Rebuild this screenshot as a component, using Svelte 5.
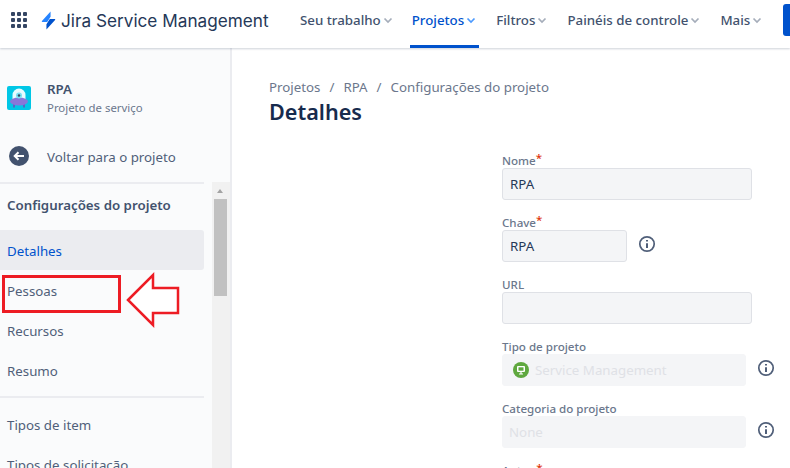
<script>
	let nav = [
		{ label: "Seu trabalho" },
		{ label: "Projetos", active: true },
		{ label: "Filtros" },
		{ label: "Painéis de controle" },
		{ label: "Mais" }
	];
	let crumbs = ["Projetos", "RPA", "Configurações do projeto"];
	let dots = [0, 1, 2, 3, 4, 5, 6, 7, 8];
</script>

<div class="page">
	<header>
		<div class="apps">
			{#each dots as d}<i></i>{/each}
		</div>
		<svg class="bolt" width="15" height="19" viewBox="0 0 16 20">
			<path d="M10.2 0.5 L1 10.6 C0.6 11 0.9 11.6 1.4 11.6 H6.6 L10.2 6 Z" fill="#2684ff"/>
			<path d="M5.8 19.5 L15 9.4 C15.4 9 15.1 8.4 14.6 8.4 H9.4 L5.8 14 Z" fill="#0052cc"/>
		</svg>
		<div class="brand">Jira Service Management</div>
		<nav>
			{#each nav as item}
				<div class="nav-item" class:active={item.active}>
					{item.label}
					<svg width="12" height="12" viewBox="0 0 12 12"><path d="M2.5 4.5 L6 8 L9.5 4.5" fill="none" stroke="currentColor" stroke-width="1.7"/></svg>
				</div>
			{/each}
		</nav>
		<div class="create"></div>
	</header>

	<div class="body">
		<aside>
			<div class="project">
				<svg class="avatar" width="24" height="24" viewBox="0 0 24 24">
					<rect width="24" height="24" rx="2" fill="#00c7e6"/>
					<path d="M7 18 v3.5 M17 18 v3.5" stroke="#6554c0" stroke-width="1.6"/>
					<path d="M5.5 15 V9 a6.5 6.5 0 0 1 13 0 V15 Z" fill="#e6fcff"/>
					<ellipse cx="12" cy="15.5" rx="9" ry="4" fill="#8777d9"/>
					<circle cx="12" cy="9.5" r="3" fill="#79e2f2"/>
					<circle cx="12" cy="9.5" r="1.2" fill="#344563"/>
				</svg>
				<div>
					<div class="project-name">RPA</div>
					<div class="project-type">Projeto de serviço</div>
				</div>
			</div>
			<div class="back">
				<svg width="20" height="20" viewBox="0 0 20 20">
					<circle cx="10" cy="10" r="10" fill="#42526e"/>
					<path d="M15 10 H6 M9.5 6.2 L5.7 10 L9.5 13.8" fill="none" stroke="#fff" stroke-width="2"/>
				</svg>
				<span>Voltar para o projeto</span>
			</div>
			<div class="scroll-area">
				<div class="menu">
					<div class="menu-title">Configurações do projeto</div>
					<div class="menu-item selected">Detalhes</div>
					<div class="menu-item">Pessoas</div>
					<div class="menu-item">Recursos</div>
					<div class="menu-item">Resumo</div>
					<div class="sep"></div>
					<div class="menu-item">Tipos de item</div>
					<div class="menu-item">Tipos de solicitação</div>
				</div>
				<div class="scrollbar">
					<div class="up"></div>
					<div class="thumb"></div>
				</div>
			</div>
			<div class="mark"></div>
			<svg class="arrow" width="60" height="60" viewBox="0 0 60 60">
				<path d="M4 30 L29 5 V18 H54 V43 H29 V55 Z" fill="#fff" stroke="#ed1c24" stroke-width="2.5"/>
			</svg>
		</aside>

		<main>
			<div class="crumbs">
				{#each crumbs as c, i}
					{#if i > 0}<span class="slash">/</span>{/if}
					<span>{c}</span>
				{/each}
			</div>
			<h1>Detalhes</h1>
			<form>
				<div class="field">
					<div class="label">Nome<b>*</b></div>
					<div class="input wide">RPA</div>
				</div>
				<div class="field">
					<div class="label">Chave<b>*</b></div>
					<div class="row">
						<div class="input short">RPA</div>
						<svg class="info" width="18" height="18" viewBox="0 0 18 18"><circle cx="9" cy="9" r="7.2" fill="none" stroke="#505f79" stroke-width="1.7"/><path d="M9 8.2 V13 M9 5 V6.6" stroke="#505f79" stroke-width="2"/></svg>
					</div>
				</div>
				<div class="field">
					<div class="label">URL</div>
					<div class="input wide"></div>
				</div>
				<div class="field">
					<div class="label">Tipo de projeto</div>
					<div class="row">
						<div class="input off type">
							<svg width="16" height="16" viewBox="0 0 16 16"><circle cx="8" cy="8" r="8" fill="#5fa83f"/><rect x="4" y="4" width="8" height="6" rx="1" fill="#fff"/><rect x="5.5" y="5.3" width="5" height="3.4" fill="#5fa83f"/><path d="M6 12 H10 M8 10 V12" stroke="#fff" stroke-width="1.2"/></svg>
							Service Management
						</div>
						<svg class="info" width="18" height="18" viewBox="0 0 18 18"><circle cx="9" cy="9" r="7.2" fill="none" stroke="#505f79" stroke-width="1.7"/><path d="M9 8.2 V13 M9 5 V6.6" stroke="#505f79" stroke-width="2"/></svg>
					</div>
				</div>
				<div class="field">
					<div class="label">Categoria do projeto</div>
					<div class="row">
						<div class="input off">None</div>
						<svg class="info" width="18" height="18" viewBox="0 0 18 18"><circle cx="9" cy="9" r="7.2" fill="none" stroke="#505f79" stroke-width="1.7"/><path d="M9 8.2 V13 M9 5 V6.6" stroke="#505f79" stroke-width="2"/></svg>
					</div>
				</div>
				<div class="field">
					<div class="label">Autor <b>*</b></div>
				</div>
			</form>
		</main>
	</div>
</div>

<style>
	:global(body) {
		margin: 0;
		background: #fff;
		overflow: hidden;
	}
	.page {
		width: 790px;
		height: 468px;
		overflow: hidden;
		font-family: "Noto Sans", Roboto, sans-serif;
		font-size: 13.3px;
		color: #42526e;
		position: relative;
	}
	header {
		height: 48px;
		display: flex;
		align-items: center;
		box-sizing: border-box;
		padding: 0 0 8px 11px;
		background: #fff;
		box-shadow: 0 1px 2px rgba(9, 30, 66, 0.2);
		position: relative;
		z-index: 2;
	}
	.apps {
		display: grid;
		grid-template-columns: repeat(3, 4px);
		gap: 2px;
		margin-right: 14px;
	}
	.apps i {
		width: 4px;
		height: 4px;
		background: #344563;
		border-radius: 1px;
	}
	.bolt {
		margin-right: 5px;
	}
	.brand {
		font-family: Inter, "Noto Sans", sans-serif;
		font-size: 17.2px;
		color: #253858;
		width: 237px;
		flex: none;
		white-space: nowrap;
	}
	nav {
		display: flex;
		align-self: flex-start;
		height: 48px;
		gap: 15px;
	}
	.nav-item {
		display: flex;
		align-items: center;
		gap: 1px;
		font-weight: 500;
		padding: 0 2px 5px;
		color: #42526e;
		box-sizing: border-box;
		border-bottom: 3px solid transparent;
		white-space: nowrap;
	}
	.nav-item svg {
		color: #a5adba;
	}
	.nav-item.active {
		color: #0052cc;
		border-bottom-color: #0052cc;
		margin-left: -1px;
	}
	.nav-item.active svg {
		color: #4c9aff;
	}
	.create {
		position: absolute;
		left: 783px;
		top: 4px;
		width: 30px;
		height: 32px;
		background: #0052cc;
		border-radius: 3px;
	}
	.body {
		display: flex;
		height: 420px;
	}
	aside {
		width: 232px;
		flex: none;
		box-sizing: border-box;
		background: #fafbfc;
		border-right: 2px solid #ebecf0;
		position: relative;
		overflow: hidden;
	}
	.project {
		display: flex;
		align-items: center;
		gap: 16px;
		padding: 32px 0 0 7px;
	}
	.project-name {
		font-weight: 600;
		line-height: 18px;
	}
	.project-type {
		font-size: 11.4px;
		line-height: 16px;
		margin-top: 2px;
		color: #6b778c;
	}
	.back {
		display: flex;
		align-items: center;
		gap: 18px;
		padding: 28px 0 0 9px;
		height: 24px;
		color: #505f79;
	}
	.back span {
		padding-top: 1px;
	}
	.scroll-area {
		display: flex;
		margin-top: 14px;
	}
	.menu {
		width: 204px;
		flex: none;
		border-top: 2px solid #ebecf0;
	}
	.menu-title {
		font-weight: 600;
		line-height: 20px;
		padding: 11px 0 0 7px;
		height: 35px;
	}
	.menu-item {
		height: 40px;
		line-height: 42px;
		padding-left: 7px;
		color: #505f79;
		border-radius: 0 3px 3px 0;
	}
	.menu-item.selected {
		background: #ebecf0;
		color: #0052cc;
	}
	.sep {
		height: 2px;
		background: #ebecf0;
		margin: 6px 0;
	}
	.scrollbar {
		width: 18px;
		margin-left: 8px;
		background: #f1f1f1;
		height: 300px;
	}
	.up {
		height: 17px;
		position: relative;
	}
	.up::after {
		content: "";
		position: absolute;
		left: 4.5px;
		top: 7px;
		border: 3.5px solid transparent;
		border-top: 0;
		border-bottom: 4px solid #a3a3a3;
	}
	.thumb {
		height: 97px;
		width: 13px;
		background: #c1c1c1;
		margin-left: 2px;
	}
	.mark {
		position: absolute;
		left: 2px;
		top: 227px;
		width: 113px;
		height: 32px;
		border: 3px solid #ed1c24;
	}
	.arrow {
		position: absolute;
		left: 124px;
		top: 222px;
	}
	main {
		flex: 1;
		padding: 29px 0 0 37px;
	}
	.crumbs {
		display: flex;
		gap: 9px;
		line-height: 20px;
		color: #6b778c;
	}
	h1 {
		margin: 0;
		font-size: 21.6px;
		line-height: 30px;
		font-weight: 600;
		color: #172b4d;
	}
	form {
		margin: 25px 0 0 233px;
	}
	.field {
		margin-bottom: 14px;
	}
	.label {
		font-size: 11.6px;
		height: 16px;
		line-height: 18px;
		font-weight: 500;
		color: #6b778c;
	}
	.label b {
		color: #de350b;
		font-weight: 500;
		position: relative;
		top: -3px;
	}
	.row {
		display: flex;
		align-items: center;
		gap: 11px;
	}
	.info {
		margin-bottom: 5px;
	}
	.input {
		box-sizing: border-box;
		height: 32px;
		display: flex;
		align-items: center;
		gap: 6px;
		padding-left: 7px;
		background: #f4f5f7;
		border: 1px solid #dfe1e6;
		border-radius: 3px;
		color: #253858;
	}
	.wide {
		width: 250px;
	}
	.short {
		width: 125px;
	}
	.off {
		width: 244px;
		border-color: #f4f5f7;
		color: #dfe1e6;
		padding-left: 6px;
	}
	.type {
		padding-left: 10px;
	}
</style>
